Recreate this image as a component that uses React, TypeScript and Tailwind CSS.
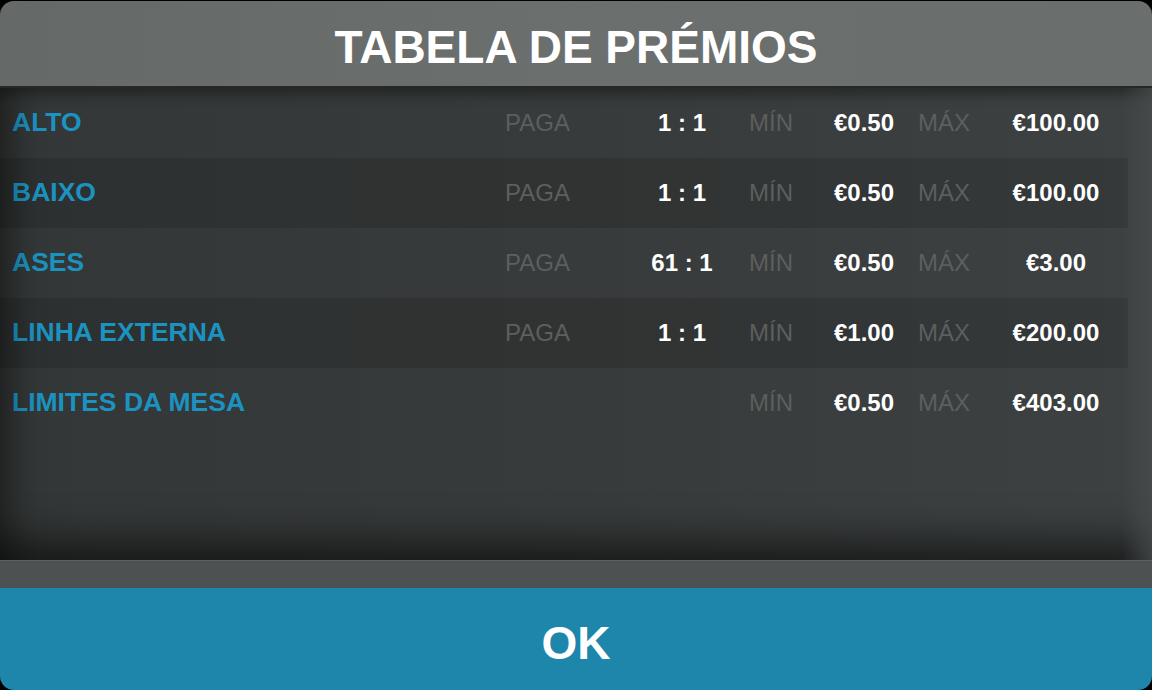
import React from "react";

type Row = {
    label: string;
    pays?: string;
    min: string;
    max: string;
};

const rows: Row[] = [
    { label: "ALTO", pays: "1 : 1", min: "€0.50", max: "€100.00" },
    { label: "BAIXO", pays: "1 : 1", min: "€0.50", max: "€100.00" },
    { label: "ASES", pays: "61 : 1", min: "€0.50", max: "€3.00" },
    { label: "LINHA EXTERNA", pays: "1 : 1", min: "€1.00", max: "€200.00" },
    { label: "LIMITES DA MESA", min: "€0.50", max: "€403.00" },
];

function PayRow({ row, striped }: { row: Row; striped: boolean }) {
    return (
        <div
            className={`grid h-[70px] grid-cols-[493px_110px_134px_85px_84px_82px_112px] items-center pl-[12px] ${
                striped ? "bg-black/[0.12]" : ""
            }`}
        >
            <span className="text-[26.5px] font-bold text-[#1b93c1]">{row.label}</span>
            <span className="text-[24px] text-[#5b5f5f]">{row.pays ? "PAGA" : ""}</span>
            <span className="text-center text-[24px] font-bold text-white">{row.pays ?? ""}</span>
            <span className="text-[24px] text-[#5b5f5f]">MÍN</span>
            <span className="text-[24px] font-bold text-white">{row.min}</span>
            <span className="text-[24px] text-[#5b5f5f]">MÁX</span>
            <span className="text-center text-[24px] font-bold text-white">{row.max}</span>
        </div>
    );
}

export default function App() {
    return (
        <div
            className="h-[690px] w-[1152px] overflow-hidden bg-black pt-px"
            style={{ fontFamily: '"Liberation Sans", Arial, sans-serif' }}
        >
            <div className="flex h-[689px] flex-col overflow-hidden rounded-[14px]">
                {/* Header */}
                <div className="flex h-[87px] shrink-0 items-center justify-center border-b-2 border-[#262828] bg-gradient-to-r from-[#656968] via-[#6b6f6e] to-[#6a6e6d] pt-[6px]">
                    <h1 className="text-[46px] font-bold leading-none text-white">TABELA DE PRÉMIOS</h1>
                </div>

                {/* Pay table */}
                <div className="relative flex-1 bg-gradient-to-r from-[#343737] via-[#383b3b] to-[#3d4141]">
                    <div className="mr-[24px]">
                        {rows.map((row, i) => (
                            <PayRow key={row.label} row={row} striped={i % 2 === 1} />
                        ))}
                    </div>
                    <div className="pointer-events-none absolute inset-0 shadow-[inset_40px_0_30px_-25px_rgba(0,0,0,0.35),inset_0_14px_14px_-8px_rgba(0,0,0,0.35),inset_0_-50px_40px_-30px_rgba(0,0,0,0.55)]" />
                    <div className="pointer-events-none absolute inset-y-0 right-0 w-[30px] bg-gradient-to-r from-transparent to-[#4a4e4e]/70" />
                </div>

                {/* Footer band */}
                <div className="h-[28px] shrink-0 border-t border-[#5c6060] bg-[#4d5151]" />

                {/* OK button */}
                <button className="flex h-[102px] shrink-0 items-center justify-center bg-[#1e86aa] pt-[8px] text-[46px] font-bold text-white">
                    OK
                </button>
            </div>
        </div>
    );
}
